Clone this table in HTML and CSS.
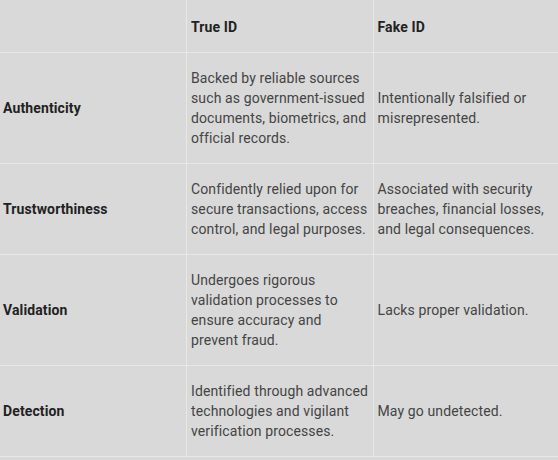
FILE: index.html
```html
<!DOCTYPE html>
<html>
<head>
<meta charset="utf-8">
<link rel="stylesheet" href="styles.css">
</head>
<body>
<table class="compare">
  <thead>
    <tr>
      <th class="label"></th>
      <th>True ID</th>
      <th>Fake ID</th>
    </tr>
  </thead>
  <tbody>
    <tr>
      <td class="label">Authenticity</td>
      <td>Backed by reliable sources such as government-issued documents, biometrics, and official records.</td>
      <td>Intentionally falsified or misrepresented.</td>
    </tr>
    <tr>
      <td class="label">Trustworthiness</td>
      <td>Confidently relied upon for secure transactions, access control, and legal purposes.</td>
      <td>Associated with security breaches, financial losses, and legal consequences.</td>
    </tr>
    <tr>
      <td class="label">Validation</td>
      <td>Undergoes rigorous validation processes to ensure accuracy and prevent fraud.</td>
      <td>Lacks proper validation.</td>
    </tr>
    <tr>
      <td class="label">Detection</td>
      <td>Identified through advanced technologies and vigilant verification processes.</td>
      <td>May go undetected.</td>
    </tr>
  </tbody>
</table>
</body>
</html>
```

FILE: styles.css
```css
html, body {
  margin: 0;
  padding: 0;
  background: #d9d9d9;
}
.compare {
  width: 560px;
  margin: -1px 0 0 0;
  border-collapse: collapse;
  table-layout: fixed;
  font-family: Roboto, "Liberation Sans", sans-serif;
  font-size: 14px;
  line-height: 20px;
  letter-spacing: 0.12px;
  color: #444;
  background: #d9d9d9;
}
.compare th,
.compare td {
  border: 1px solid #e8e8e8;
  padding: 15px 1px 15px 4px;
  text-align: left;
  vertical-align: middle;
}
.compare th {
  padding-top: 17px;
  font-weight: 700;
  color: #222;
}
.compare .label {
  border-left: none;
  padding-left: 3px;
  font-weight: 700;
  color: #222;
}
```
